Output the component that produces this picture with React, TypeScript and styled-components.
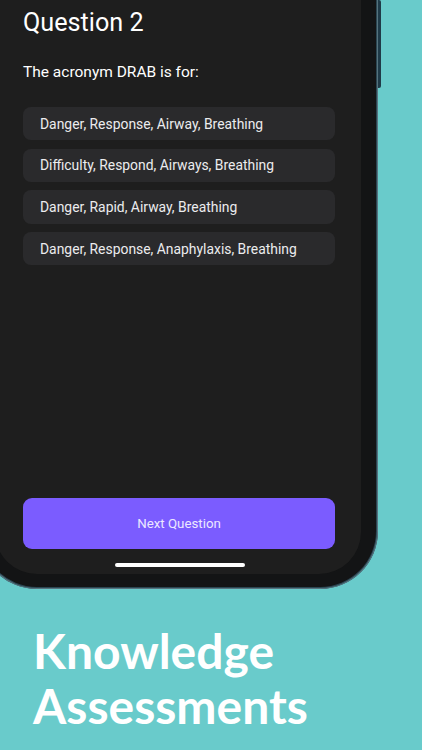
import React from "react";
import styled, { createGlobalStyle } from "styled-components";

const GlobalStyle = createGlobalStyle`
  html, body {
    margin: 0;
    padding: 0;
    background: #69cbcb;
    overflow: hidden;
  }
  * {
    box-sizing: border-box;
  }
`;

const Page = styled.div`
  width: 422px;
  height: 750px;
  overflow: hidden;
  display: flex;
  flex-direction: column;
  background: #69cbcb;
`;

const Phone = styled.div`
  position: relative;
  margin: -80px 0 0 -21px;
  width: 399px;
  height: 669px;
  flex-shrink: 0;
  padding: 2px;
  border-radius: 58px;
  background: #2b4652;
  box-shadow: inset 0 0 0 1px #56737e;

  &::after {
    content: "";
    position: absolute;
    right: -3px;
    top: 80px;
    width: 3px;
    height: 88px;
    border-radius: 0 2px 2px 0;
    background: #1f3a48;
  }
`;

const Bezel = styled.div`
  height: 100%;
  display: flex;
  padding: 14px 15px 13px 14px;
  border-radius: 56px;
  background: #131415;
`;

const Screen = styled.div`
  flex: 1;
  display: flex;
  flex-direction: column;
  padding: 72px 26px 7px 28px;
  border-radius: 42px;
  background: #1e1e1e;
  font-family: Roboto, "Liberation Sans", sans-serif;
  color: #ffffff;
`;

const Title = styled.h1`
  margin: 0;
  font-size: 25.2px;
  line-height: 30px;
  font-weight: 400;
`;

const Prompt = styled.p`
  margin: 24px 0 0;
  font-size: 15.5px;
  line-height: 20px;
  font-weight: 400;
`;

const Options = styled.div`
  display: flex;
  flex-direction: column;
  gap: 8.4px;
  margin-top: 25px;
`;

const Option = styled.button`
  height: 33.3px;
  display: flex;
  align-items: center;
  padding: 0 17px;
  border: none;
  border-radius: 8px;
  background: #2a2a2c;
  color: #ececee;
  font-family: inherit;
  font-size: 13.9px;
  white-space: nowrap;
  text-align: left;
`;

const NextButton = styled.button`
  margin-top: auto;
  height: 51px;
  border: none;
  border-radius: 9px;
  background: #7b5cff;
  color: #ece8ff;
  font-family: inherit;
  font-size: 13.3px;
`;

const HomeIndicator = styled.div`
  align-self: center;
  width: 130px;
  height: 4px;
  margin-top: 14.5px;
  margin-left: 2px;
  border-radius: 2px;
  background: #ffffff;
`;

const Headline = styled.h2`
  margin: 34px 0 0;
  padding-left: 33px;
  font-family: Lato, "Open Sans", sans-serif;
  font-weight: 700;
  font-size: 48px;
  line-height: 55px;
  color: #ffffff;
`;

const answers = [
  "Danger, Response, Airway, Breathing",
  "Difficulty, Respond, Airways, Breathing",
  "Danger, Rapid, Airway, Breathing",
  "Danger, Response, Anaphylaxis, Breathing",
];

export default function App() {
  return (
    <Page>
      <GlobalStyle />
      <Phone>
        <Bezel>
          <Screen>
            <Title>Question 2</Title>
            <Prompt>The acronym DRAB is for:</Prompt>
            <Options>
              {answers.map((a) => (
                <Option key={a}>{a}</Option>
              ))}
            </Options>
            <NextButton>Next Question</NextButton>
            <HomeIndicator />
          </Screen>
        </Bezel>
      </Phone>
      <Headline>
        Knowledge
        <br />
        Assessments
      </Headline>
    </Page>
  );
}
